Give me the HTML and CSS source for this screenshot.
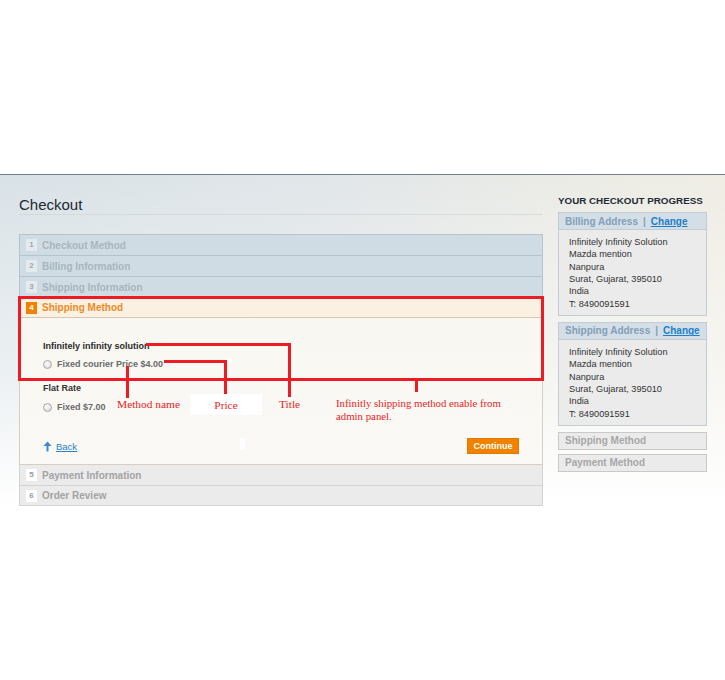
FILE: index.html
```html
<!DOCTYPE html>
<html>
<head>
<meta charset="utf-8">
<link rel="stylesheet" href="styles.css">
</head>
<body>
<div class="blank"></div>
<div class="page">
  <main class="col-main">
    <h1 class="page-title">Checkout</h1>
    <ol class="steps">
      <li class="step step-done"><span class="num">1</span><span class="step-title">Checkout Method</span></li>
      <li class="step step-done"><span class="num">2</span><span class="step-title">Billing Information</span></li>
      <li class="step step-done"><span class="num">3</span><span class="step-title">Shipping Information</span></li>
      <li class="step-active">
        <div class="step step-current"><span class="num">4</span><span class="step-title">Shipping Method</span></div>
        <div class="step-body">
          <div class="carrier">Infinitely infinity solution</div>
          <label class="rate"><span class="radio"></span>Fixed courier Price $4.00</label>
          <div class="carrier carrier-2">Flat Rate</div>
          <label class="rate"><span class="radio"></span>Fixed $7.00</label>
          <div class="actions">
            <a class="back" href="#"><svg class="back-icon" width="9" height="11" viewBox="0 0 9 11"><path d="M4.5 0.5 L8.5 5 L5.5 5 L5.5 10.5 L3.5 10.5 L3.5 5 L0.5 5 Z" fill="#3b88d2"/></svg><span>Back</span></a>
            <button class="btn">Continue</button>
          </div>
        </div>
      </li>
      <li class="step step-next"><span class="num">5</span><span class="step-title">Payment Information</span></li>
      <li class="step step-next step-last"><span class="num">6</span><span class="step-title">Order Review</span></li>
    </ol>
  </main>
  <aside class="sidebar">
    <h2 class="side-title">YOUR CHECKOUT PROGRESS</h2>
    <div class="box">
      <div class="box-head"><span>Billing Address</span><span class="sep">|</span><a href="#">Change</a></div>
      <address class="box-body">Infinitely Infinity Solution<br>Mazda mention<br>Nanpura<br>Surat, Gujarat, 395010<br>India<br>T: 8490091591</address>
    </div>
    <div class="box">
      <div class="box-head"><span>Shipping Address</span><span class="sep">|</span><a href="#">Change</a></div>
      <address class="box-body">Infinitely Infinity Solution<br>Mazda mention<br>Nanpura<br>Surat, Gujarat, 395010<br>India<br>T: 8490091591</address>
    </div>
    <div class="box box-empty">Shipping Method</div>
    <div class="box box-empty box-last">Payment Method</div>
  </aside>
</div>

<div class="notes">
  <div class="n-box"></div>
  <div class="n-line title-h"></div>
  <div class="n-line title-v"></div>
  <div class="n-line price-h"></div>
  <div class="n-line price-v"></div>
  <div class="n-line method-v"></div>
  <div class="n-line info-v"></div>
  <div class="speck speck-1"></div>
  <div class="speck speck-2"></div>
  <div class="n-text n-method">Method name</div>
  <div class="n-text n-price">Price</div>
  <div class="n-text n-title">Title</div>
  <div class="n-text n-info">Infinitly shipping method enable from<br>admin panel.</div>
</div>
</body>
</html>
```
FILE: styles.css
```css
* { box-sizing: border-box; }
html, body { margin: 0; padding: 0; background: #fff; }
body { font-family: "Liberation Sans", Arial, sans-serif; width: 725px; height: 680px; overflow: hidden; }

.blank { height: 174px; background: #fff; }

.page {
  display: flex;
  gap: 15px;
  padding: 0 18px 40px 19px;
  border-top: 1px solid #6f808d;
  background:
    linear-gradient(to bottom, rgba(255,255,255,0) 0, rgba(255,255,255,0.5) 200px, #fff 330px),
    linear-gradient(to right, #d9e2e7 0, #e1e6e9 45%, #eaebe6 75%, #efede4 100%);
}

.col-main { width: 524px; }

.page-title {
  margin: 0;
  padding-top: 20px;
  height: 40px;
  font-size: 15px;
  font-weight: normal;
  line-height: 20px;
  color: #1d2833;
  border-bottom: 1px solid #d5dadc;
}

.steps { list-style: none; margin: 19px 0 0; padding: 0; }

.step {
  display: flex;
  align-items: center;
  gap: 5px;
  height: 21px;
  padding-left: 6px;
  font-size: 10px;
  font-weight: bold;
  border: 1px solid #b7c3ca;
  border-top: 0;
}
.step-done:first-child { border-top: 1px solid #b7c3ca; height: 22px; }
.step-done { background: #d0dce3; color: #a8b6be; }
.step-done .num { background: #e4eaee; color: #9aa8b0; }

.num {
  width: 11px;
  height: 12px;
  font-size: 8px;
  line-height: 12px;
  text-align: center;
  font-weight: bold;
}

.step-current { background: #fbf1e2; color: #f08a1e; border-color: #d6c7b3; height: 20px; }
.step-current .num { background: #f18200; color: #fff; }

.step-body {
  height: 147px;
  padding: 22px 23px 0;
  background: linear-gradient(to bottom, #f8f7f2, #faf9f5);
  border: 1px solid #d8cfc1;
  border-top: 0;
}

.carrier { font-size: 9px; font-weight: bold; color: #2a2a2a; line-height: 12px; }
.carrier-2 { margin-top: 11px; color: #333; }

.rate {
  display: flex;
  align-items: center;
  gap: 5px;
  margin-top: 5px;
  height: 14px;
  font-size: 9px;
  font-weight: bold;
  color: #6a6a6a;
}
.carrier-2 + .rate { margin-top: 6px; }

.radio {
  width: 9px;
  height: 9px;
  border-radius: 50%;
  border: 1px solid #a9a9a9;
  background: radial-gradient(circle at 40% 35%, #fbfbfb, #d6d6d6);
}

.actions {
  display: flex;
  justify-content: space-between;
  align-items: center;
  margin-top: 24px;
  height: 16px;
}

.back { display: flex; align-items: center; gap: 4px; color: #2a7fc9; font-size: 9.5px; text-decoration: none; }
.back span { text-decoration: underline; }
.back-icon { display: block; }

.btn {
  width: 52px;
  height: 16px;
  padding: 0;
  border: 1px solid #e27a00;
  background: #f18200;
  color: #fff;
  font-family: "Liberation Sans", Arial, sans-serif;
  font-size: 9px;
  font-weight: bold;
}

.step-next { background: #ebebeb; color: #a3a3a3; border-color: #d3d3d3; }
.step-next .num { background: #fff; color: #999; }
.step-last { height: 20px; }

.sidebar { width: 149px; padding-top: 20px; }

.side-title {
  margin: 0 0 5px;
  font-size: 9.8px;
  line-height: 12px;
  font-weight: bold;
  color: #1d2b36;
}

.box { border: 1px solid #c3ccd2; background: #ebebeb; margin-bottom: 6px; }

.box-head {
  display: flex;
  align-items: center;
  gap: 5px;
  height: 17px;
  padding-left: 6px;
  background: #d3dee6;
  border-bottom: 1px solid #c3ccd2;
  font-size: 10px;
  font-weight: bold;
  color: #82a0b9;
}
.box-head a { color: #1e7ec8; text-decoration: underline; }
.sep { color: #82a0b9; }

.box-body {
  display: block;
  padding: 6px 0 5px 10px;
  font-style: normal;
  font-size: 9.2px;
  line-height: 12.33px;
  color: #333;
}

.box-empty {
  height: 18px;
  padding-left: 6px;
  font-size: 10px;
  line-height: 16px;
  font-weight: bold;
  color: #a7a7a7;
  border-color: #c9c9c9;
  margin-bottom: 4px;
}

/* annotation overlay */
.notes { position: absolute; left: 0; top: 0; width: 0; height: 0; }
.n-box {
  position: absolute;
  left: 18px; top: 296px; width: 526px; height: 85px;
  border: 3px solid #ed1c24;
}
.n-line { position: absolute; background: #ed1c24; }
.title-h { left: 146px; top: 343px; width: 145px; height: 3px; }
.title-v { left: 288px; top: 343px; width: 3px; height: 54px; }
.price-h { left: 164px; top: 360px; width: 63px; height: 3px; }
.price-v { left: 224px; top: 360px; width: 3px; height: 37px; }
.method-v { left: 126px; top: 366px; width: 3px; height: 32px; }
.info-v { left: 415px; top: 380px; width: 3px; height: 12px; }

.speck { position: absolute; background: #fff; }
.speck-1 { left: 228px; top: 358px; width: 4px; height: 5px; }
.speck-2 { left: 240px; top: 438px; width: 5px; height: 11px; }

.n-text {
  position: absolute;
  font-family: "Liberation Serif", "Times New Roman", serif;
  font-size: 11.4px;
  line-height: 13px;
  color: #ed1c24;
  white-space: nowrap;
}
.n-method { left: 117px; top: 398px; }
.n-price { left: 190px; top: 394px; width: 72px; height: 21px; line-height: 22px; text-align: center; background: #fff; }
.n-title { left: 279px; top: 398px; }
.n-info { left: 336px; top: 397px; font-size: 10.8px; }
```
